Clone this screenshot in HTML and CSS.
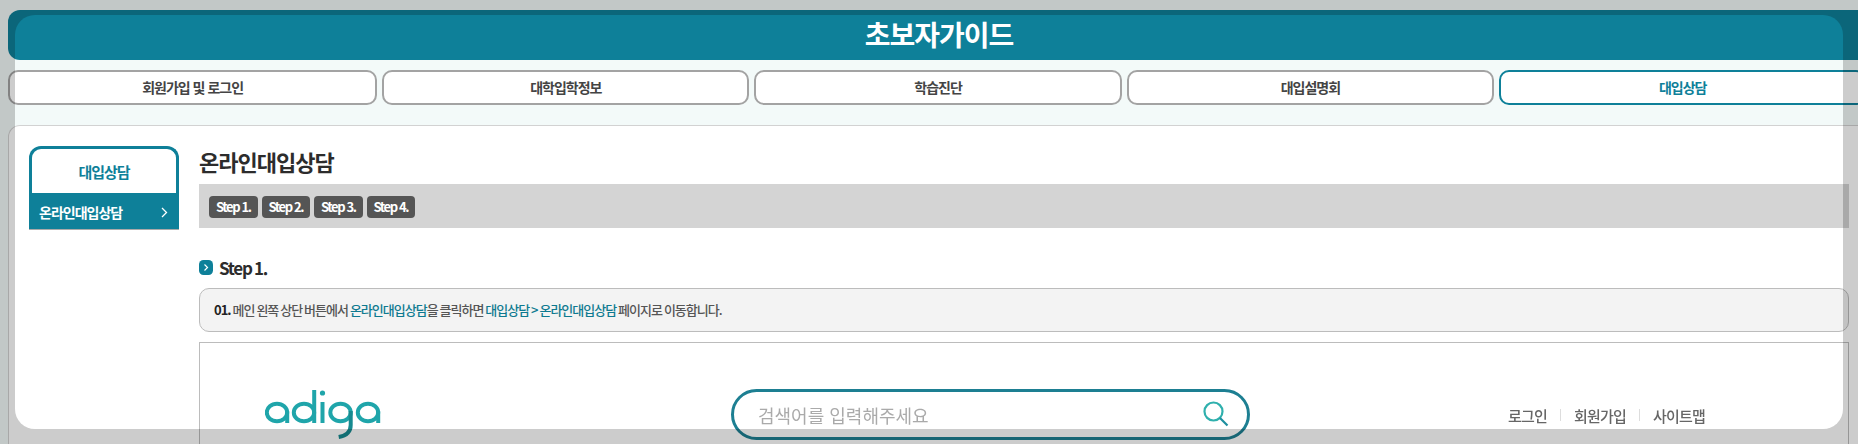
FILE: index.html
```html
<!DOCTYPE html>
<html lang="ko">
<head>
<meta charset="utf-8">
<title>초보자가이드</title>
<link rel="stylesheet" href="styles.css">
</head>
<body>
<div class="page">
  <header class="guide-head">초보자가이드</header>
  <nav class="tabs">
    <a class="tab">회원가입 및 로그인</a>
    <a class="tab">대학입학정보</a>
    <a class="tab">학습진단</a>
    <a class="tab">대입설명회</a>
    <a class="tab tab-on">대입상담</a>
  </nav>
  <section class="panel">
    <aside class="side">
      <div class="side-title">대입상담</div>
      <div class="side-item">
        <span>온라인대입상담</span>
        <svg class="side-chev" width="7" height="11" viewBox="0 0 7 11"><path d="M1 1l4.5 4.5L1 10" fill="none" stroke="#fff" stroke-width="1.3"/></svg>
      </div>
    </aside>
    <main class="main">
      <h1 class="page-title">온라인대입상담</h1>
      <div class="step-bar">
        <span class="pill">Step 1.</span>
        <span class="pill">Step 2.</span>
        <span class="pill">Step 3.</span>
        <span class="pill">Step 4.</span>
      </div>
      <h2 class="step-head">
        <svg class="step-icon" width="14" height="15" viewBox="0 0 14 15"><rect width="14" height="15" rx="4.5" fill="#0e8099"/><path d="M5.5 4.5l3 3-3 3" fill="none" stroke="#fff" stroke-width="1.2"/></svg>
        Step 1.
      </h2>
      <p class="note"><b>01.</b> 메인 왼쪽 상단 버튼에서 <em>온라인대입상담</em>을 클릭하면 <em>대입상담 &gt; 온라인대입상담</em> 페이지로 이동합니다.</p>
      <div class="shot">
        <svg class="logo" width="118" height="50" viewBox="0 0 118 50" fill="none" stroke="#1fa5aa" stroke-width="4">
          <ellipse cx="12" cy="22.5" rx="10.2" ry="8.8"/><path d="M22.2 21v12"/>
          <ellipse cx="39" cy="22.5" rx="10.2" ry="8.8"/><path d="M49.2 0v33"/>
          <path d="M57.5 12v21"/><circle cx="57.5" cy="3" r="2.6" fill="#1fa5aa" stroke="none"/>
          <ellipse cx="75.5" cy="22.5" rx="10.2" ry="8.8"/><path d="M85.7 21v14q0 10-12 12" stroke="#178a90"/>
          <ellipse cx="103" cy="22.5" rx="10.2" ry="8.8"/><path d="M113.2 21v12"/>
        </svg>
        <div class="search">
          <span>검색어를 입력해주세요</span>
          <svg width="26" height="28" viewBox="0 0 26 28" fill="none" stroke="#2fb0ad" stroke-width="2.2"><circle cx="10.5" cy="10.5" r="9"/><path d="M17 17l7.5 7.5" stroke="#1d8f9f"/></svg>
        </div>
        <div class="util"><span>로그인</span><i></i><span>회원가입</span><i></i><span>사이트맵</span></div>
      </div>
    </main>
  </section>
</div>
<div class="spotlight"></div>
</body>
</html>
```
FILE: styles.css
```css
* { box-sizing: border-box; }
html, body { margin: 0; height: 444px; overflow: hidden; }
body { background: #f3faf9; font-family: "Noto Sans CJK KR", "Noto Sans", sans-serif; color: #333; }
.page { width: 1858px; height: 444px; padding: 10px 0 0 8px; overflow: hidden; }
.guide-head { width: 1862px; height: 50px; background: #0e8099; border-radius: 12px; color: #fff; font-size: 28px; font-weight: 700; letter-spacing: -1px; line-height: 48px; text-align: center; }
.tabs { display: flex; gap: 5px; margin-top: 10px; }
.tab { flex: none; width: 367.3px; height: 35px; border: 2px solid #a3a3a3; border-radius: 10px; background: #fff; color: #444; font-size: 14px; font-weight: 700; letter-spacing: -1px; line-height: 30px; text-align: center; }
.tab:first-child { width: 369.2px; }
.tab-on { border-color: #0e8099; color: #0e8099; }
.panel { display: flex; align-items: flex-start; gap: 20px; width: 1880px; height: 319px; margin-top: 20px; padding: 20px 0 0 20px; background: #fff; border: 1px solid #d2d2d2; border-bottom: 0; border-radius: 12px 12px 0 0; }
.side { flex: none; width: 150px; }
.side-title { height: 47px; border: 3px solid #0e8099; border-bottom: 0; border-radius: 12px 12px 0 0; color: #0e8099; font-size: 15px; font-weight: 700; letter-spacing: -1px; line-height: 45px; text-align: center; }
.side-item { display: flex; justify-content: space-between; align-items: center; height: 37px; padding: 2px 11px 0 10px; background: #0e8099; border-bottom: 1px solid #aaa; color: #fff; font-size: 14px; font-weight: 700; letter-spacing: -1px; }
.main { flex: none; width: 1650px; }
.page-title { margin: 0; height: 38px; color: #2c2c2c; font-size: 22px; font-weight: 700; letter-spacing: -1px; line-height: 30px; }
.step-bar { display: flex; gap: 4px; height: 44px; padding: 12px 0 0 10px; background: #d4d4d4; }
.pill { width: 48.5px; height: 22px; background: #555; border-radius: 4px; color: #fff; font-size: 13px; font-weight: 700; letter-spacing: -1.4px; line-height: 21px; text-align: center; white-space: nowrap; }
.step-head { display: flex; align-items: center; gap: 6px; height: 16px; margin: 31px 0 0; color: #2c2c2c; font-size: 17px; font-weight: 700; letter-spacing: -1.3px; word-spacing: -1px; }
.note { height: 44px; margin: 13px 0 0; padding-left: 14px; background: #f3f3f3; border: 1px solid #bcbcbc; border-radius: 10px; color: #555; font-size: 13px; font-weight: 500; letter-spacing: -1px; word-spacing: -.7px; line-height: 41px; }
.note b { color: #222; font-weight: 700; }
.note em { color: #0e7a90; font-style: normal; }
.shot { display: flex; align-items: flex-start; height: 120px; margin-top: 10px; padding: 47px 0 0 65px; border: 1px solid #bcbcbc; background: #fff; }
.logo { flex: none; filter: blur(.4px); }
.search { display: flex; align-items: center; justify-content: space-between; flex: none; width: 519px; height: 51px; margin: -1px 0 0 348px; padding: 0 18px 0 24px; border: 3px solid #1d7f92; border-radius: 26px; color: #aaa; font-size: 18px; filter: blur(.4px); }
.util { display: flex; align-items: center; gap: 13px; height: 24px; margin: 13px 0 0 258px; color: #666; font-size: 15px; font-weight: 500; letter-spacing: -.8px; white-space: nowrap; filter: blur(.4px); }
.util i { width: 1px; height: 12px; background: #ddd; }
.spotlight { position: absolute; top: 15px; left: 15px; width: 1828px; height: 414px; border-radius: 20px; box-shadow: 0 0 0 2000px rgba(0,0,0,.2); }
```
